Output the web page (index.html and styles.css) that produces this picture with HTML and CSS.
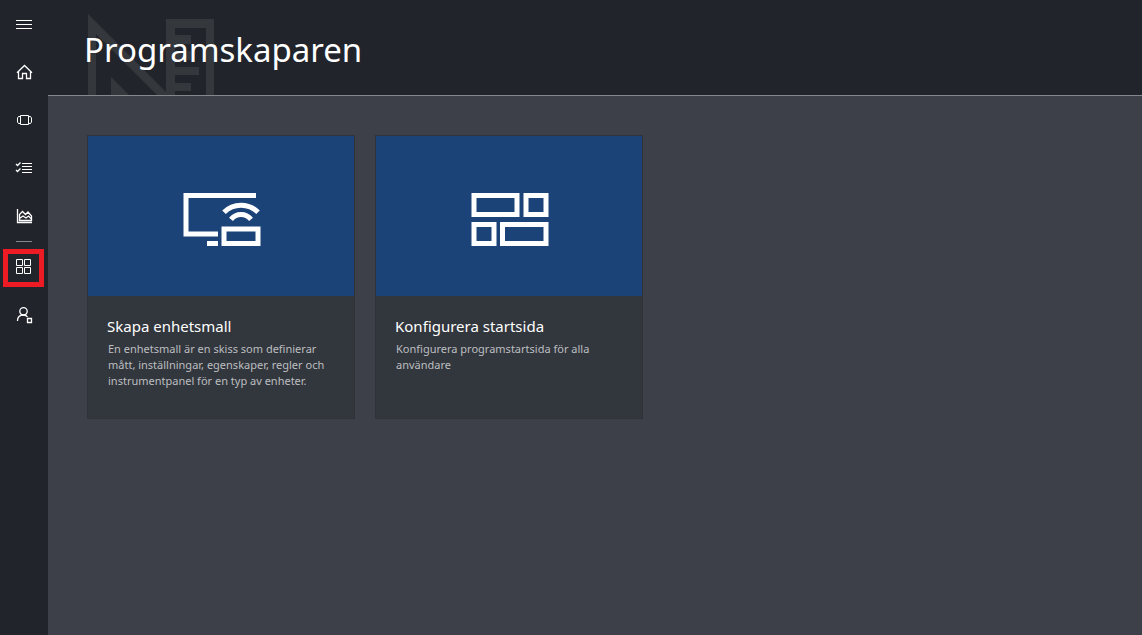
FILE: index.html
```html
<!DOCTYPE html>
<html lang="sv">
<head>
<meta charset="utf-8">
<meta name="viewport" content="width=device-width, initial-scale=1">
<title>Programskaparen</title>
<link rel="stylesheet" href="styles.css">
</head>
<body>
<div class="app">
  <nav class="rail" aria-label="Huvudmeny">
    <button class="rail-item" type="button" aria-label="Meny">
      <svg class="icon" viewBox="0 0 18 18"><path d="M1 5.500h16M1 9.500h16M1 13.500h16"/></svg>
    </button>
    <a class="rail-item" href="#" aria-label="Start">
      <svg class="icon icon-strong" viewBox="0 0 18 18"><path d="M2 9.800L9.500 2.500l7.500 7.300M3.500 8.500v7h4v-5h4v5h4v-7"/></svg>
    </a>
    <a class="rail-item" href="#" aria-label="Enheter">
      <svg class="icon" viewBox="0 0 18 18"><path d="M5.500 4.500h8v9h-8zM5 5.500H3.500L2.500 7v4l1 1.500H5M14 5.500h1.500l1 1.500v4l-1 1.500H14"/></svg>
    </a>
    <a class="rail-item" href="#" aria-label="Regler">
      <svg class="icon" viewBox="0 0 18 18"><path d="M7 4.500h10M7 7.500h10M7 10.500h10M7 13.500h10"/><path class="tick" d="M1 5l1.500 1.500L5.500 3.500M1 11l1.500 1.500L5.500 9.500"/></svg>
    </a>
    <a class="rail-item" href="#" aria-label="Analys">
      <svg class="icon icon-strong" viewBox="0 0 18 18"><path d="M2.500 2v13.500H17M4.500 13.500V7.500L7.500 4.500l3 3 2.500-2.500 3.500 4v4.500zM4.500 11.500l3.500-2.500 3 2 2.500-2 3 3"/></svg>
    </a>
    <hr class="rail-divider">
    <a class="rail-item rail-item-active" href="#" aria-label="Programskaparen" aria-current="page">
      <svg class="icon" viewBox="0 0 18 18"><path d="M1.500 1.500h6v6h-6zM9.500 1.500h6v6h-6zM1.500 9.500h6v6h-6zM9.500 9.500h6v6h-6z"/></svg>
    </a>
    <a class="rail-item" href="#" aria-label="Administration">
      <svg class="icon icon-strong" viewBox="0 0 18 18"><circle cx="8.500" cy="5.300" r="3.700"/><path d="M2.500 15c0-4 2-6 6-6 1.800 0 3.200.8 4 2M12.500 12.500h4v4h-4z"/></svg>
    </a>
  </nav>
  <div class="page">
    <header class="page-header">
      <svg class="emblem" viewBox="0 0 126 81" aria-hidden="true">
        <path fill-rule="evenodd" d="M0 0L79 79V81H69L8 20V81H0zM23 63L41 81H23z"/>
        <path d="M78 5h48v76h-8V14H87v7h16v9H87v7h16v9H87v7h24v8H87v8h16v8H87v4h-9z"/>
      </svg>
      <h1 class="page-title">Programskaparen</h1>
    </header>
    <main class="cards">
      <a class="card" href="#">
        <span class="card-art">
          <svg class="card-icon" viewBox="0 0 80 54" aria-hidden="true">
            <path d="M75 3.500H5v38.500h32M26 51.500h11M43 37h34v14.500H43zM43 20.300a24 24 0 0 1 34 0M50 27.300a13 13 0 0 1 20 0"/>
          </svg>
        </span>
        <span class="card-body">
          <span class="card-title">Skapa enhetsmall</span>
          <span class="card-text">En enhetsmall är en skiss som definierar mått, inställningar, egenskaper, regler och instrumentpanel för en typ av enheter.</span>
        </span>
      </a>
      <a class="card" href="#">
        <span class="card-art">
          <svg class="card-icon" viewBox="0 0 80 54" aria-hidden="true">
            <path d="M5 3.500h43v19H5zM57 3.500h20v19H57zM5 32.500h20v19H5zM33.500 32.500H77v19H33.500z"/>
          </svg>
        </span>
        <span class="card-body">
          <span class="card-title">Konfigurera startsida</span>
          <span class="card-text">Konfigurera programstartsida för alla användare</span>
        </span>
      </a>
    </main>
  </div>
</div>
</body>
</html>
```
FILE: styles.css
```css
* {
  box-sizing: border-box;
}

body {
  margin: 0;
  background: #3d4048;
  color: #fff;
  font-family: "Segoe UI", "Noto Sans", "Open Sans", sans-serif;
}

.app {
  display: flex;
  min-height: 100vh;
}

.rail {
  display: flex;
  flex: none;
  flex-direction: column;
  width: 48px;
  background: #21242b;
}

.rail-item {
  position: relative;
  display: grid;
  place-items: center;
  height: 48px;
  padding: 0;
  border: 0;
  background: none;
  color: #fff;
}

.rail-item-active::after {
  content: "";
  position: absolute;
  inset: 6px 4px 4px 3px;
  border: 5px solid #ed1c24;
}

.icon {
  width: 18px;
  height: 18px;
  fill: none;
  stroke: currentColor;
  stroke-width: 1;
}

.icon-strong,
.tick {
  stroke-width: 1.3;
}

.rail-divider {
  width: 16px;
  height: 1px;
  margin: 1px auto;
  border: 0;
  background: #85878b;
}

.page {
  flex: 1;
  min-width: 0;
}

.page-header {
  position: relative;
  height: 96px;
  padding: 26px 36px 0;
  border-bottom: 1px solid #85878b;
  background: #21242b;
}

.emblem {
  position: absolute;
  bottom: 0;
  left: 40px;
  width: 126px;
  height: 81px;
  fill: #34373c;
}

.page-title {
  position: relative;
  margin: 0;
  font-size: 33px;
  font-weight: 400;
  line-height: 48px;
}

.cards {
  display: flex;
  flex-wrap: wrap;
  gap: 20px;
  padding: 39px;
}

.card {
  display: flex;
  flex-direction: column;
  width: 268px;
  min-height: 284px;
  border: 1px solid #303338;
  background: #32363d;
  color: #fff;
  text-decoration: none;
}

.card-art {
  display: grid;
  place-items: center;
  height: 160px;
  padding-top: 6px;
  background: #1c4378;
}

.card-icon {
  width: 80px;
  height: 54px;
  fill: none;
  stroke: #fff;
  stroke-width: 5;
}

.card-body {
  display: flex;
  flex-direction: column;
  gap: 5px;
  padding: 20px 18px 20px 19px;
}

.card-title {
  font-size: 15px;
  line-height: 20px;
}

.card-text {
  padding-left: 1px;
  color: #bcbec0;
  font-size: 11px;
  line-height: 16px;
}
```
